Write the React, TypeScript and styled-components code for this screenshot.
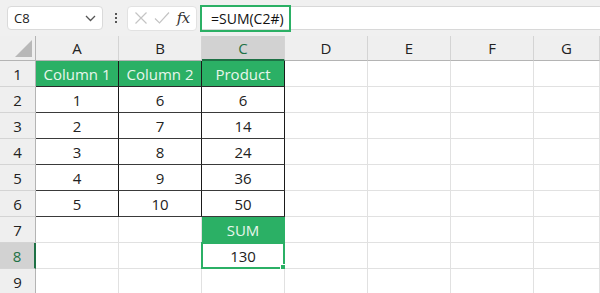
import React from 'react';
import styled, { createGlobalStyle, css } from 'styled-components';

const GlobalStyle = createGlobalStyle`
  html, body {
    margin: 0;
    padding: 0;
    background: #ffffff;
    font-family: "Open Sans", "Noto Sans", "Liberation Sans", sans-serif;
  }
  * {
    box-sizing: border-box;
  }
`;

const GREEN = '#2bb065';
const DARK_GREEN = '#1e7145';

const Window = styled.div`
  width: 600px;
  height: 293px;
  overflow: hidden;
  background: #f0f0f0;
  display: flex;
  flex-direction: column;
`;

const FormulaBar = styled.div`
  height: 36px;
  display: flex;
  align-items: center;
  padding: 0 0 0 7px;
  flex-shrink: 0;
`;

const NameBox = styled.div`
  width: 96px;
  height: 24px;
  background: #fff;
  border: 1px solid #dadada;
  border-radius: 4px;
  display: flex;
  align-items: center;
  justify-content: space-between;
  padding: 0 6px 0 6px;
  font-size: 13px;
  color: #222;
`;

const Dots = styled.div`
  width: 18px;
  display: flex;
  flex-direction: column;
  align-items: center;
  gap: 2px;
  margin: 0 2px 0 4px;

  & > span {
    width: 2px;
    height: 2px;
    background: #555;
  }
`;

const ButtonBox = styled.div`
  width: 70px;
  height: 25px;
  background: #fff;
  border: 1px solid #e2e2e2;
  border-radius: 4px;
  display: flex;
  align-items: center;
  justify-content: space-around;
  padding: 0 3px;
`;

const Fx = styled.span`
  font-family: "DejaVu Serif", "Liberation Serif", serif;
  font-style: italic;
  font-size: 15px;
  color: #333;
  letter-spacing: -0.5px;
`;

const FormulaInput = styled.div`
  flex: 1;
  height: 24px;
  margin-left: 3px;
  background: #fff;
  border-top: 1px solid #d8d8d8;
  border-bottom: 1px solid #d8d8d8;
  display: flex;
  align-items: center;
`;

const Highlight = styled.div`
  width: 91px;
  height: 27px;
  border: 2px solid ${GREEN};
  display: flex;
  align-items: center;
  padding-left: 9px;
  font-size: 14px;
  color: #111;
`;

const Sheet = styled.div`
  display: grid;
  grid-template-columns: 36px repeat(6, 83px) 1fr;
  grid-template-rows: 25px repeat(9, 26px);
`;

const Corner = styled.div`
  background: #efefef;
  border-right: 1px solid #b4b4b4;
  border-bottom: 1px solid #b4b4b4;
  position: relative;

  &::after {
    content: '';
    position: absolute;
    right: 3px;
    bottom: 3px;
    width: 0;
    height: 0;
    border-left: 17px solid transparent;
    border-bottom: 17px solid #b8b8b8;
  }
`;

const ColHead = styled.div<{ $active?: boolean }>`
  background: ${p => (p.$active ? '#d2d2d2' : '#efefef')};
  border-right: 1px solid #d4d4d4;
  border-bottom: ${p => (p.$active ? `2px solid ${DARK_GREEN}` : '1px solid #b4b4b4')};
  display: flex;
  align-items: center;
  justify-content: center;
  font-size: 15px;
  color: ${p => (p.$active ? DARK_GREEN : '#222')};
`;

const RowHead = styled.div<{ $active?: boolean }>`
  background: ${p => (p.$active ? '#d2d2d2' : '#efefef')};
  border-right: ${p => (p.$active ? `2px solid ${DARK_GREEN}` : '1px solid #b4b4b4')};
  border-bottom: 1px solid #d4d4d4;
  display: flex;
  align-items: center;
  justify-content: center;
  font-size: 15px;
  color: ${p => (p.$active ? DARK_GREEN : '#222')};
`;

type CellKind = 'plain' | 'head' | 'data' | 'sum' | 'selected';

const Cell = styled.div<{ $kind: CellKind }>`
  background: #fff;
  border-right: 1px solid #e1e1e1;
  border-bottom: 1px solid #e1e1e1;
  display: flex;
  align-items: center;
  justify-content: center;
  font-size: 15px;
  color: #222;
  position: relative;

  ${p =>
    p.$kind === 'head' &&
    css`
      background: ${GREEN};
      color: #e8f6ec;
      border-right: 1px solid #1a1a1a;
      border-bottom: 1px solid #2a2a2a;
    `}

  ${p =>
    p.$kind === 'data' &&
    css`
      border-right: 1px solid #1a1a1a;
      border-bottom: 1px solid #3a3a3a;
    `}

  ${p =>
    p.$kind === 'sum' &&
    css`
      background: ${GREEN};
      color: #e8f6ec;
      border-right: 1px solid ${GREEN};
      border-bottom: 1px solid #e1e1e1;
    `}

  ${p =>
    p.$kind === 'selected' &&
    css`
      border: 2px solid ${GREEN};
      margin: -1px 0 0 -1px;
      &::after {
        content: '';
        position: absolute;
        right: -4px;
        bottom: -4px;
        width: 5px;
        height: 5px;
        background: ${GREEN};
        border: 1px solid #fff;
      }
    `}
`;

const ChevronIcon = () => (
  <svg width="11" height="7" viewBox="0 0 11 7">
    <path d="M1 1 L5.5 5.5 L10 1" fill="none" stroke="#555" strokeWidth="1.3" />
  </svg>
);

const CrossIcon = () => (
  <svg width="14" height="14" viewBox="0 0 14 14">
    <path d="M1.5 1.5 L12.5 12.5 M12.5 1.5 L1.5 12.5" stroke="#c4c4c4" strokeWidth="1.2" />
  </svg>
);

const CheckIcon = () => (
  <svg width="16" height="14" viewBox="0 0 16 14">
    <path d="M1 7.5 L5.5 12 L15 1.5" fill="none" stroke="#c4c4c4" strokeWidth="1.2" />
  </svg>
);

const columns = ['A', 'B', 'C', 'D', 'E', 'F', 'G'];

const tableRows: string[][] = [
  ['Column 1', 'Column 2', 'Product'],
  ['1', '6', '6'],
  ['2', '7', '14'],
  ['3', '8', '24'],
  ['4', '9', '36'],
  ['5', '10', '50'],
];

const cellFor = (row: number, col: number): { kind: CellKind; text: string } => {
  if (row === 1 && col < 3) return { kind: 'head', text: tableRows[0][col] };
  if (row >= 2 && row <= 6 && col < 3) return { kind: 'data', text: tableRows[row - 1][col] };
  if (row === 7 && col === 2) return { kind: 'sum', text: 'SUM' };
  if (row === 8 && col === 2) return { kind: 'selected', text: '130' };
  return { kind: 'plain', text: '' };
};

const App = () => {
  const rows = [1, 2, 3, 4, 5, 6, 7, 8, 9];

  return (
    <>
      <GlobalStyle />
      <Window>
        <FormulaBar>
          <NameBox>
            <span>C8</span>
            <ChevronIcon />
          </NameBox>
          <Dots>
            <span />
            <span />
            <span />
          </Dots>
          <ButtonBox>
            <CrossIcon />
            <CheckIcon />
            <Fx>fx</Fx>
          </ButtonBox>
          <FormulaInput>
            <Highlight>=SUM(C2#)</Highlight>
          </FormulaInput>
        </FormulaBar>
        <Sheet>
          <Corner />
          {columns.map(c => (
            <ColHead key={c} $active={c === 'C'}>
              {c}
            </ColHead>
          ))}
          {rows.map(r => (
            <React.Fragment key={r}>
              <RowHead $active={r === 8}>{r}</RowHead>
              {columns.map((c, ci) => {
                const { kind, text } = cellFor(r, ci);
                return (
                  <Cell key={c} $kind={kind}>
                    {text}
                  </Cell>
                );
              })}
            </React.Fragment>
          ))}
        </Sheet>
      </Window>
    </>
  );
};

export default App;
